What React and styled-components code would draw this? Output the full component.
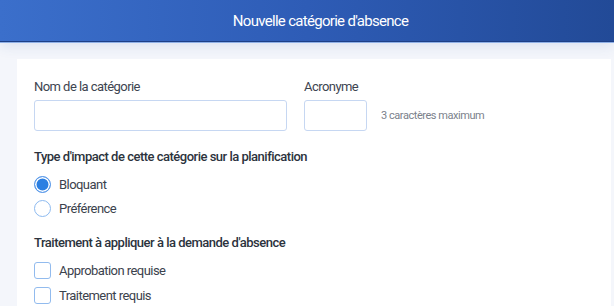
import React from "react";
import styled, { createGlobalStyle } from "styled-components";

const GlobalStyle = createGlobalStyle`
  html, body {
    margin: 0;
    padding: 0;
    background: #f4f6fb;
    font-family: Roboto, "Liberation Sans", sans-serif;
    overflow: hidden;
  }
`;

const impacts = [
  { id: "bloquant", label: "Bloquant", checked: true },
  { id: "preference", label: "Préférence", checked: false },
];

const treatments = [
  { id: "approbation", label: "Approbation requise" },
  { id: "traitement", label: "Traitement requis" },
];

const App = () => {
  return (
    <Page>
      <GlobalStyle />
      <Header>
        <Title>Nouvelle catégorie d'absence</Title>
      </Header>
      <Main>
        <Card>
          <FieldRow>
            <Field>
              <Label>Nom de la catégorie</Label>
              <Input width="253px" />
            </Field>
            <Field>
              <Label>Acronyme</Label>
              <InputLine>
                <Input width="63px" />
                <Hint>3 caractères maximum</Hint>
              </InputLine>
            </Field>
          </FieldRow>

          <Section>
            <SectionTitle>Type d'impact de cette catégorie sur la planification</SectionTitle>
            <Options>
              {impacts.map((item) => (
                <Option key={item.id} rowHeight="24px">
                  <Radio checked={item.checked} />
                  <OptionText>{item.label}</OptionText>
                </Option>
              ))}
            </Options>
          </Section>

          <Section>
            <SectionTitle>Traitement à appliquer à la demande d'absence</SectionTitle>
            <Options>
              {treatments.map((item) => (
                <Option key={item.id} rowHeight="25px">
                  <Checkbox />
                  <OptionText>{item.label}</OptionText>
                </Option>
              ))}
            </Options>
          </Section>
        </Card>
      </Main>
    </Page>
  );
};

export default App;

const Page = styled.div`
  width: 614px;
  height: 306px;
  display: flex;
  flex-direction: column;
  overflow: hidden;
`;

const Header = styled.header`
  height: 41px;
  flex-shrink: 0;
  display: flex;
  align-items: center;
  justify-content: center;
  padding-left: 27px;
  background: linear-gradient(90deg, #3b6fcb 0%, #2e5cb6 50%, #224a97 100%);
  border-bottom: 1px solid #1d3f86;
  box-shadow: 0 1px 0 #8fb0e6, 0 4px 14px rgba(40, 80, 160, 0.12);
  position: relative;
  z-index: 1;
`;

const Title = styled.h1`
  margin: 0;
  padding-top: 1px;
  color: #ffffff;
  font-size: 15px;
  font-weight: 400;
  letter-spacing: -0.7px;
`;

const Main = styled.main`
  flex: 1;
  padding: 17px 3px 0 17px;
  display: flex;
`;

const Card = styled.div`
  flex: 1;
  background: #ffffff;
  padding: 20px 17px;
  display: flex;
  flex-direction: column;
`;

const FieldRow = styled.div`
  display: flex;
  gap: 17px;
`;

const Field = styled.div`
  display: flex;
  flex-direction: column;
`;

const Label = styled.label`
  font-size: 13px;
  line-height: 16px;
  letter-spacing: -0.55px;
  color: #3d4450;
  margin-bottom: 5px;
`;

const InputLine = styled.div`
  display: flex;
  align-items: center;
  gap: 14px;
`;

const Input = styled.div`
  width: ${(p) => p.width};
  height: 31px;
  box-sizing: border-box;
  border: 1px solid #c6d7f2;
  border-radius: 3px;
  background: #ffffff;
`;

const Hint = styled.span`
  font-size: 11px;
  letter-spacing: -0.45px;
  color: #7b818b;
`;

const Section = styled.section`
  margin-top: 18px;
  & + & {
    margin-top: 15px;
  }
`;

const SectionTitle = styled.h2`
  margin: 0 0 7px;
  font-size: 13px;
  line-height: 16px;
  font-weight: 500;
  letter-spacing: -0.5px;
  color: #2c333d;
`;

const Options = styled.div`
  display: flex;
  flex-direction: column;
`;

const Option = styled.div`
  height: ${(p) => p.rowHeight};
  display: flex;
  align-items: center;
  gap: 8px;
`;

const Radio = styled.span`
  width: 17px;
  height: 17px;
  box-sizing: border-box;
  border-radius: 50%;
  border: 1.5px solid ${(p) => (p.checked ? "#5d9bea" : "#8dbaf0")};
  background: ${(p) => (p.checked ? "#2b7fe2" : "#ffffff")};
  box-shadow: ${(p) => (p.checked ? "inset 0 0 0 1.5px #ffffff" : "none")};
`;

const Checkbox = styled.span`
  width: 17px;
  height: 17px;
  box-sizing: border-box;
  border-radius: 3px;
  border: 1.5px solid #92bbee;
  background: #ffffff;
`;

const OptionText = styled.span`
  font-size: 13px;
  letter-spacing: -0.55px;
  color: #3b424d;
`;
